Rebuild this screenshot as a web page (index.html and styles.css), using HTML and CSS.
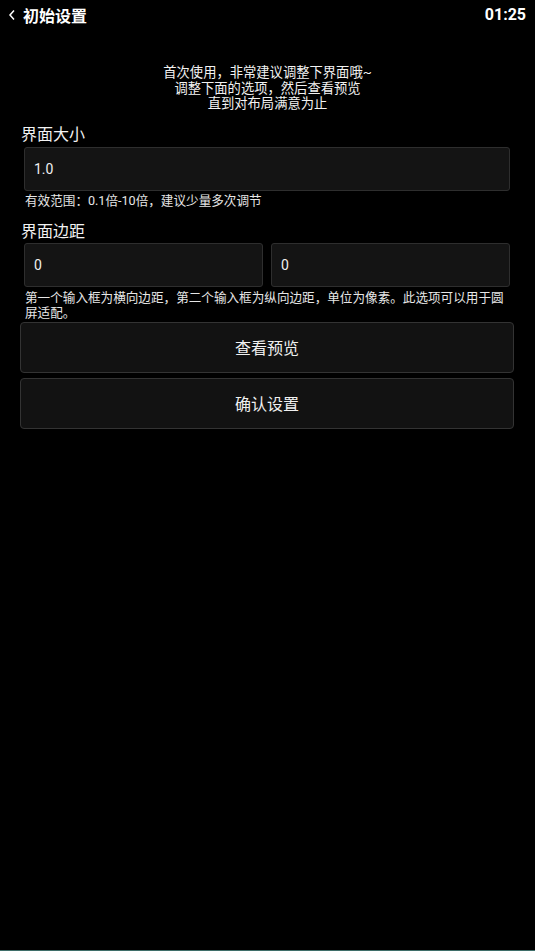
FILE: index.html
```html
<!DOCTYPE html>
<html lang="zh-CN">
<head>
<meta charset="utf-8">
<title>初始设置</title>
<link rel="stylesheet" href="styles.css">
</head>
<body>
<div class="app">
  <header class="header">
    <div class="back">
      <svg class="chev" width="8" height="12" viewBox="0 0 8 12"><polyline points="6,1.5 2,6 6,10.5" fill="none" stroke="#fff" stroke-width="1.5"/></svg>
      <span class="title">初始设置</span>
    </div>
    <span class="time">01:25</span>
  </header>

  <p class="intro">首次使用，非常建议调整下界面哦~<br>调整下面的选项，然后查看预览<br>直到对布局满意为止</p>

  <div class="label l1">界面大小</div>
  <div class="field">1.0</div>
  <div class="help h1">有效范围：0.1倍-10倍，建议少量多次调节</div>

  <div class="label l2">界面边距</div>
  <div class="row">
    <div class="field">0</div>
    <div class="field">0</div>
  </div>
  <div class="help h2">第一个输入框为横向边距，第二个输入框为纵向边距，单位为像素。此选项可以用于圆屏适配。</div>

  <div class="btn b1">查看预览</div>
  <div class="btn b2">确认设置</div>
</div>
</body>
</html>
```

FILE: styles.css
```css
html, body {
  margin: 0;
  padding: 0;
  background: #000;
}
body {
  font-family: Roboto, "Noto Sans CJK SC", sans-serif;
  color: #fff;
}
.app {
  min-height: 951px;
  box-sizing: border-box;
  border-bottom: 1px solid #3f6e69;
}
.header {
  height: 30px;
  display: flex;
  align-items: center;
  justify-content: space-between;
  padding: 0 9px 0 8px;
}
.back {
  display: flex;
  align-items: center;
  gap: 7px;
}
.chev {
  display: block;
}
.title {
  font-size: 16px;
  font-weight: bold;
  line-height: 20px;
  font-family: "Noto Sans CJK SC", sans-serif;
}
.time {
  font-size: 16px;
  font-weight: bold;
  line-height: 20px;
}
.intro {
  margin: 35px 0 0;
  text-align: center;
  font-size: 13.3px;
  line-height: 15.5px;
  color: #f2f2f2;
}
.label {
  margin-left: 21px;
  font-size: 16px;
  line-height: 20px;
  color: #f2f2f2;
}
.l1 { margin-top: 13px; }
.l2 { margin-top: 14px; }
.field {
  box-sizing: border-box;
  height: 44px;
  margin: 2px 25px 0 24px;
  background: #141414;
  border: 1px solid #2e2e2e;
  border-radius: 3px;
  padding-left: 9px;
  display: flex;
  align-items: center;
  font-size: 14px;
  color: #f0f0f0;
}
.row {
  display: flex;
  gap: 8px;
  margin: 1px 25px 0 24px;
}
.row .field {
  flex: 1;
  margin: 0;
}
.help {
  margin: 0 25px 0 25px;
  font-size: 12.6px;
  line-height: 15px;
  color: #e6e6e6;
}
.h1 { margin-top: 2px; }
.h2 { margin-top: 3px; }
.btn {
  box-sizing: border-box;
  height: 51px;
  margin: 0 21px 0 20px;
  background: #121212;
  border: 1px solid #333;
  border-radius: 4px;
  display: flex;
  align-items: center;
  justify-content: center;
  font-size: 16px;
  color: #f0f0f0;
}
.b1 { margin-top: 2px; }
.b2 { margin-top: 5px; }
```
